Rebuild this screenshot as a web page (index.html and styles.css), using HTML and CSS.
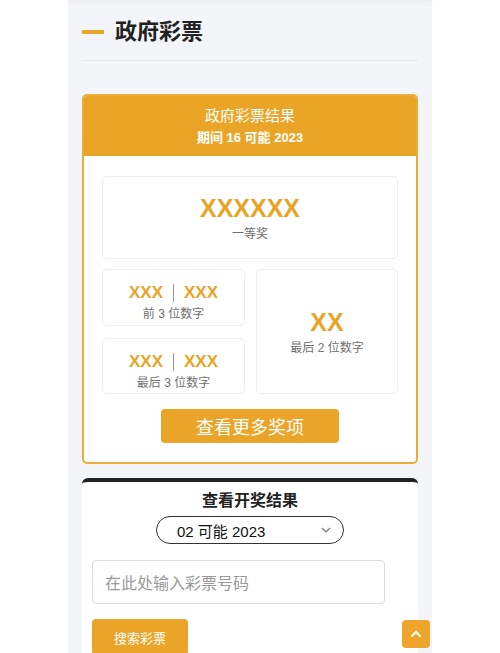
FILE: index.html
```html
<!DOCTYPE html>
<html lang="zh">
<head>
<meta charset="utf-8">
<title>政府彩票</title>
<link rel="stylesheet" href="styles.css">
</head>
<body>
<div class="page">
  <div class="topbar"></div>
  <div class="title-row">
    <span class="title-bar"></span>
    <h1 class="title">政府彩票</h1>
  </div>

  <section class="result-card">
    <header class="result-head">
      <div class="head-title">政府彩票结果</div>
      <div class="head-sub">期间 16 可能 2023</div>
    </header>
    <div class="result-body">
      <div class="prize prize-first">
        <div class="num-big">XXXXXX</div>
        <div class="label">一等奖</div>
      </div>
      <div class="prize-grid">
        <div class="prize prize-small">
          <div class="num-pair"><span>XXX</span><i class="sep"></i><span>XXX</span></div>
          <div class="label">前 3 位数字</div>
        </div>
        <div class="prize prize-tall">
          <div class="num-big">XX</div>
          <div class="label">最后 2 位数字</div>
        </div>
        <div class="prize prize-small">
          <div class="num-pair"><span>XXX</span><i class="sep"></i><span>XXX</span></div>
          <div class="label">最后 3 位数字</div>
        </div>
      </div>
      <div class="more-wrap"><button class="more-btn">查看更多奖项</button></div>
    </div>
  </section>

  <section class="check-card">
    <div class="check-title">查看开奖结果</div>
    <div class="select">
      <span>02 可能 2023</span>
      <svg class="chev" width="10" height="6" viewBox="0 0 10 6"><path d="M1 1l4 4 4-4" fill="none" stroke="#777" stroke-width="1.1"/></svg>
    </div>
    <div class="input">在此处输入彩票号码</div>
    <button class="search-btn">搜索彩票</button>
  </section>
</div>
<a class="to-top" href="#">
  <svg width="12" height="8" viewBox="0 0 12 8"><path d="M1.5 6.5L6 2l4.5 4.5" fill="none" stroke="#fff" stroke-width="2"/></svg>
</a>
</body>
</html>
```

FILE: styles.css
```css
* { box-sizing: border-box; }
html, body { margin: 0; padding: 0; }
body {
  background: #ffffff;
  font-family: "Liberation Sans", "Noto Sans CJK SC", sans-serif;
  color: #222;
}
.page {
  width: 364px;
  margin-left: 68px;
  min-height: 653px;
  background: #f4f5f9;
  padding: 0 14px;
  position: relative;
}
.topbar {
  height: 1px;
  margin: 0 -14px;
  box-shadow: 0 1px 6px rgba(0,0,0,0.14);
  background: #eee;
}
.title-row {
  display: flex;
  align-items: center;
  margin-top: 16px;
  padding-bottom: 13px;
  border-bottom: 1px solid #e6e8ec;
}
.title-bar {
  width: 22px;
  height: 4px;
  background: #eaa427;
  margin-right: 11px;
}
.title {
  margin: 0;
  font-size: 22px;
  line-height: 30px;
  font-weight: 700;
  color: #222;
}
.result-card {
  margin-top: 33px;
  border: 2px solid #e9ad3c;
  border-radius: 5px;
  background: #fff;
  overflow: hidden;
}
.result-head {
  background: #eba526;
  color: #fff;
  text-align: center;
  padding: 9px 0 8px;
}
.head-title { font-size: 15px; line-height: 22px; }
.head-sub { font-size: 13px; line-height: 20px; font-weight: 700; margin-top: 1px; }
.result-body {
  padding: 20px 18px 19px;
}
.prize {
  border: 1px solid #eeeeee;
  border-radius: 5px;
  background: #fff;
  display: flex;
  flex-direction: column;
  align-items: center;
  justify-content: flex-start;
}
.prize-first { height: 83px; padding-top: 16px; }
.prize-small { padding-top: 12px; }
.prize-tall { grid-column: 2; grid-row: 1 / span 2; padding-top: 37px; }
.num-big {
  font-size: 25px;
  line-height: 30px;
  font-weight: 700;
  color: #e8a427;
  margin-bottom: 2px;
}
.label {
  font-size: 12px;
  line-height: 18px;
  color: #6f6f6f;
}
.prize-grid {
  margin-top: 10px;
  display: grid;
  grid-template-columns: 143px 142px;
  grid-template-rows: 57px 56px;
  column-gap: 11px;
  row-gap: 12px;
}
.num-pair {
  display: flex;
  align-items: center;
  font-size: 17px;
  line-height: 22px;
  font-weight: 700;
  color: #e8a427;
  margin-bottom: 1px;
}
.sep {
  display: block;
  width: 1px;
  height: 18px;
  background: #999;
  margin: 0 10px;
}
.more-wrap { display: flex; justify-content: center; margin-top: 15px; }
.more-btn {
  width: 178px;
  height: 34px;
  border: none;
  border-radius: 4px;
  background: #eaa427;
  color: #fff;
  font-family: inherit;
  font-size: 18px;
  padding: 0;
}
.check-card {
  margin-top: 14px;
  background: #fff;
  border-top: 4px solid #222;
  border-radius: 6px 6px 0 0;
  padding: 8px 10px 0;
  display: flex;
  flex-direction: column;
  min-height: 180px;
}
.check-title {
  text-align: center;
  font-size: 16px;
  line-height: 22px;
  font-weight: 700;
  color: #222;
}
.select {
  align-self: center;
  margin-top: 4px;
  width: 188px;
  height: 28px;
  border: 1px solid #333;
  border-radius: 14px;
  display: flex;
  align-items: center;
  justify-content: space-between;
  padding: 0 12px 0 20px;
  font-size: 15px;
  color: #111;
}
.chev { display: block; }
.input {
  margin-top: 16px;
  width: 293px;
  height: 44px;
  border: 1px solid #dddddd;
  border-radius: 4px;
  display: flex;
  align-items: center;
  padding-left: 12px;
  font-size: 16px;
  color: #999;
}
.search-btn {
  margin-top: 15px;
  width: 96px;
  height: 36px;
  border: none;
  border-radius: 4px;
  background: #eaa427;
  color: #fff;
  font-family: inherit;
  font-size: 13px;
  padding: 0;
}
.to-top {
  position: fixed;
  right: 70px;
  bottom: 5px;
  width: 28px;
  height: 28px;
  border-radius: 4px;
  background: #eda52b;
  display: flex;
  align-items: center;
  justify-content: center;
}
```
